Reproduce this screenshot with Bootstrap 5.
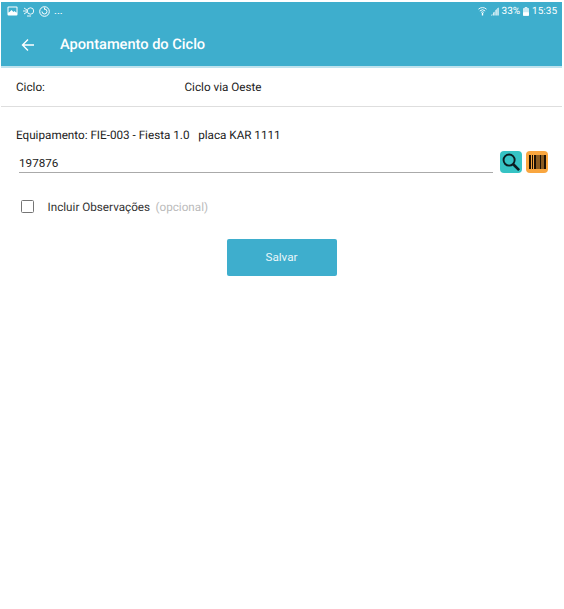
<!DOCTYPE html>
<html lang="pt">
<head>
<meta charset="utf-8">
<title>Apontamento do Ciclo</title>
<link href="https://cdn.jsdelivr.net/npm/bootstrap@5.3.0/dist/css/bootstrap.min.css" rel="stylesheet">
<style>
html,body{height:100%}
body{background:#fff;font-family:Roboto,"Liberation Sans",sans-serif;color:#222;font-size:11.7px;padding:2px 2px 0 1px;text-rendering:geometricPrecision}
.app-top{background:#3eaecd;color:#fff;height:64px}
.app-rule{height:2px;background:#bfe3ee}
.status-row{height:18px;padding:0 5px 0 6px;font-size:10px}
.status-row svg{display:block}
.status-dots{font-size:11px;margin-left:4px}
.wifi-icon{margin-left:auto}
.signal-icon{margin-left:4px}
.status-pct{margin-left:3px}
.status-batt{margin-left:3px}
.status-time{margin-left:3px}
.title-row{height:48px;padding-left:20px;padding-top:2px}
.title-text{font-size:14.6px;font-weight:500;margin-left:25px}
.ciclo-row{height:39px;padding:2px 0 0 15px;border-bottom:1px solid #dedede}
.ciclo-label{width:168.5px}
.equip-line{margin:21px 0 0 15px;line-height:14px;white-space:pre}
.input-row{margin:7px 14px 0 18px;height:25px}
.code-field{flex:1;height:23px;border:0;border-bottom:1px solid #aaa;border-radius:0;padding:3px 0 0;font-size:11.7px;line-height:20px;box-shadow:none;color:#222;background:transparent}
.tool-btn{width:22px;height:22px;border-radius:4px;border:0;padding:0;display:flex;align-items:center;justify-content:center}
.tool-search{background:#36c3c4;margin-left:7px}
.tool-code{background:#f9a63f;margin-left:4px}
.check-row{margin:20px 0 0 20px;height:24px}
.check-row .check-box[type=checkbox]{width:13px;height:13px;margin:0;border:1.5px solid #757575;border-radius:1.5px;box-shadow:none}
.check-text{margin-left:13.5px;margin-bottom:0;color:#333;padding-top:3px}
.opt-text{color:#bbb;margin-left:2.5px}
.save-wrap{margin-top:21px}
.save-btn{background:#3eaecd;color:#e8f6fa;width:110px;height:37px;border:0;border-radius:2px;font-size:11.7px;padding:0}
</style>
</head>
<body>
<div class="app-top">
  <div class="status-row d-flex align-items-center">
    <svg width="11" height="10" viewBox="0 0 11 10"><rect x=".5" y=".5" width="10" height="9" rx="1" fill="#fff"/><rect x="1.5" y="1.5" width="8" height="5" fill="#3eaecd"/><path d="M1.5 7l3-3 2 2 1-1 2 2z" fill="#fff"/></svg>
    <svg class="ms-1" width="13" height="11" viewBox="0 0 13 11" fill="none" stroke="#fff" stroke-width=".9"><circle cx="8.500" cy="5" r="3.200"/><path d="M1 5h4M2 2l3 2M2 8l3-2M5 10h4"/></svg>
    <svg class="ms-1" width="11" height="11" viewBox="0 0 11 11" fill="none" stroke="#fff" stroke-width="1"><circle cx="5.500" cy="5.500" r="4.800"/><path d="M3 5.500a2.500 2.500 0 1 0 2.500-2.500M5.500 1.500v2"/></svg>
    <span class="status-dots">...</span>
    <svg class="wifi-icon" width="9" height="10" viewBox="0 0 10 10" fill="none" stroke="#fff"><path d="M.5 3a6.500 6.500 0 0 1 9 0M2 5a4.300 4.300 0 0 1 6 0M3.500 6.600a2 2 0 0 1 3 0"/><path d="M5 7v3" stroke-width="1.500"/></svg>
    <svg class="signal-icon" width="8" height="9" viewBox="0 0 9 9" fill="#fff"><path d="M0 9l1.500-2v2zM2.500 9V6L4 4.500V9zM5 9V3.200L6.400 1.600V9zM7.200 9V.8L8.600 0v9z"/></svg>
    <span class="status-pct">33%</span>
    <svg class="status-batt" width="6" height="9" viewBox="0 0 7 10"><rect x="2" width="3" height="1" fill="#fff"/><rect y="1" width="7" height="9" rx=".8" fill="#cdeaf3"/><rect y="6" width="7" height="4" rx=".8" fill="#fff"/></svg>
    <span class="status-time">15:35</span>
  </div>
  <div class="title-row d-flex align-items-center">
    <svg width="14" height="14" viewBox="0 0 14 14" fill="none" stroke="#fff" stroke-width="1.4"><path d="M13 7H1.500M7 1.500L1.500 7 7 12.500"/></svg>
    <span class="title-text">Apontamento do Ciclo</span>
  </div>
</div>
<div class="app-rule"></div>
<div class="ciclo-row d-flex align-items-center">
  <span class="ciclo-label">Ciclo:</span>
  <span>Ciclo via Oeste</span>
</div>
<div class="equip-line">Equipamento: FIE-003 - Fiesta 1.0   placa KAR 1111</div>
<div class="input-row d-flex align-items-center">
  <input class="form-control code-field" type="text" value="197876" aria-label="Código">
  <button class="btn tool-btn tool-search" type="button" aria-label="Buscar">
    <svg width="20" height="20" viewBox="0 0 18 18" fill="none" stroke="#0c1c20"><circle cx="7.300" cy="7.300" r="5" stroke-width="1.700"/><path d="M11 11l5.300 5.300" stroke-width="2.400"/></svg>
  </button>
  <button class="btn tool-btn tool-code" type="button" aria-label="Código de barras">
    <svg width="17" height="14" viewBox="0 0 17 14" fill="#1a1005"><path d="M0 0h2v14H0zM3 0h1v14H3zM5 0h2.500v14H5zM8.500 0h1v14h-1zM10.500 0h2v14h-2zM13.500 0h1v14h-1zM15 0h2v14h-2z"/></svg>
  </button>
</div>
<div class="check-row d-flex align-items-center">
  <input class="form-check-input check-box" type="checkbox" id="obs">
  <label class="check-text" for="obs">Incluir Observações <span class="opt-text">(opcional)</span></label>
</div>
<div class="save-wrap d-flex justify-content-center">
  <button class="btn save-btn" type="button">Salvar</button>
</div>
</body>
</html>
